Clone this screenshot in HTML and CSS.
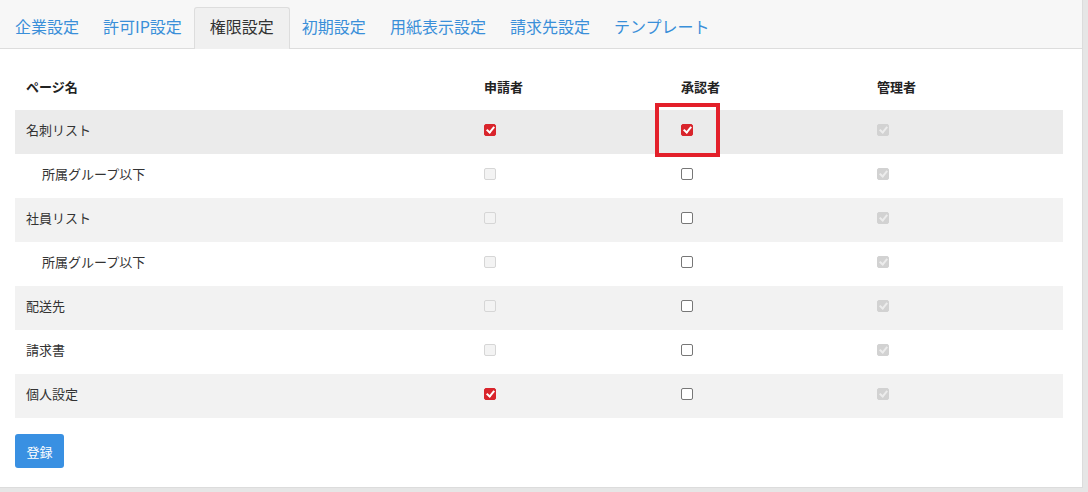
FILE: index.html
```html
<!DOCTYPE html>
<html lang="ja">
<head>
<meta charset="utf-8">
<title>権限設定</title>
<link rel="stylesheet" href="styles.css">
</head>
<body>
<div class="panel">
  <nav class="tabs">
    <a class="tab">企業設定</a>
    <a class="tab">許可IP設定</a>
    <a class="tab active">権限設定</a>
    <a class="tab">初期設定</a>
    <a class="tab">用紙表示設定</a>
    <a class="tab">請求先設定</a>
    <a class="tab">テンプレート</a>
  </nav>
  <div class="content">
    <table class="perm">
      <colgroup>
        <col class="c-name"><col class="c-a"><col class="c-b"><col class="c-c">
      </colgroup>
      <thead>
        <tr><th>ページ名</th><th>申請者</th><th>承認者</th><th>管理者</th></tr>
      </thead>
      <tbody>
        <tr class="hover">
          <td>名刺リスト</td>
          <td><input type="checkbox" class="cb" checked></td>
          <td class="mark-cell"><input type="checkbox" class="cb" checked><span class="mark"></span></td>
          <td><input type="checkbox" class="cb" checked disabled></td>
        </tr>
        <tr>
          <td class="sub">所属グループ以下</td>
          <td><input type="checkbox" class="cb" disabled></td>
          <td><input type="checkbox" class="cb"></td>
          <td><input type="checkbox" class="cb" checked disabled></td>
        </tr>
        <tr class="odd">
          <td>社員リスト</td>
          <td><input type="checkbox" class="cb" disabled></td>
          <td><input type="checkbox" class="cb"></td>
          <td><input type="checkbox" class="cb" checked disabled></td>
        </tr>
        <tr>
          <td class="sub">所属グループ以下</td>
          <td><input type="checkbox" class="cb" disabled></td>
          <td><input type="checkbox" class="cb"></td>
          <td><input type="checkbox" class="cb" checked disabled></td>
        </tr>
        <tr class="odd">
          <td>配送先</td>
          <td><input type="checkbox" class="cb" disabled></td>
          <td><input type="checkbox" class="cb"></td>
          <td><input type="checkbox" class="cb" checked disabled></td>
        </tr>
        <tr>
          <td>請求書</td>
          <td><input type="checkbox" class="cb" disabled></td>
          <td><input type="checkbox" class="cb"></td>
          <td><input type="checkbox" class="cb" checked disabled></td>
        </tr>
        <tr class="odd">
          <td>個人設定</td>
          <td><input type="checkbox" class="cb" checked></td>
          <td><input type="checkbox" class="cb"></td>
          <td><input type="checkbox" class="cb" checked disabled></td>
        </tr>
      </tbody>
    </table>
    <button class="btn">登録</button>
  </div>
</div>
</body>
</html>
```

FILE: styles.css
```css
html, body {
  margin: 0;
  padding: 0;
}
body {
  background: #e6e6e6;
  font-family: "Noto Sans CJK JP", "Noto Sans", sans-serif;
  color: #333;
  width: 1088px;
  height: 492px;
  overflow: hidden;
}
.panel {
  width: 1083px;
  height: 488px;
  background: #fff;
  border-right: 1px solid #dcdcdc;
  border-bottom: 1px solid #dcdcdc;
  box-sizing: border-box;
}
.tabs {
  display: flex;
  align-items: flex-end;
  height: 49px;
  box-sizing: border-box;
  padding-left: 3px;
  background: #f7f7f7;
  border-bottom: 1px solid #dddddd;
}
.tab {
  display: flex;
  align-items: center;
  height: 41px;
  box-sizing: border-box;
  padding: 0 12px 6px;
  font-size: 16px;
  color: #3a8fd9;
  white-space: nowrap;
  margin-bottom: -1px;
}
.tab.active {
  padding: 0 15px 5px;
  height: 42px;
  color: #333;
  background: #f0f0f0;
  border: 1px solid #dddddd;
  border-bottom: none;
  border-radius: 3px 3px 0 0;
}
.content {
  padding: 16px 0 0 15px;
}
.perm {
  border-collapse: collapse;
  width: 1048px;
  table-layout: fixed;
  font-size: 13px;
}
.c-name { width: 458px; }
.c-a { width: 197px; }
.c-b { width: 196px; }
.c-c { width: 197px; }
.perm th {
  height: 45px;
  box-sizing: border-box;
  text-align: left;
  font-weight: bold;
  padding: 0 11px 2px;
  color: #222;
}
.perm td {
  height: 44px;
  box-sizing: border-box;
  padding: 0 11px 5px;
  vertical-align: middle;
}
.perm td.sub {
  padding-left: 27px;
}
.perm tr.hover td { background: #ebebeb; }
.perm tr.odd td { background: #f2f2f2; }
.mark-cell {
  position: relative;
}
.mark {
  position: absolute;
  left: -15px;
  top: -7px;
  width: 65px;
  height: 54px;
  box-sizing: border-box;
  border: 4px solid #e3202a;
  pointer-events: none;
}
.cb {
  -webkit-appearance: none;
  appearance: none;
  display: block;
  margin: 0;
  width: 12px;
  height: 12px;
  box-sizing: border-box;
  border: 1px solid #777;
  border-radius: 2px;
  background: #fff;
  position: relative;
}
.cb:checked {
  background: #d9252c;
  border-color: #d9252c;
}
.cb:checked::after {
  content: "";
  position: absolute;
  left: 3px;
  top: 0px;
  width: 3px;
  height: 6px;
  border: solid #fff;
  border-width: 0 2px 2px 0;
  transform: rotate(40deg);
}
.cb:disabled {
  background: #f3f3f3;
  border-color: #d6d6d6;
}
.cb:disabled:checked {
  background: #d2d2d2;
  border-color: #d2d2d2;
}
.cb:disabled:checked::after {
  border-color: #ececec;
}
.btn {
  display: block;
  margin-top: 16px;
  width: 49px;
  height: 34px;
  border: none;
  border-radius: 3px;
  background: #3990e2;
  color: #fff;
  font-family: "Noto Sans CJK JP", sans-serif;
  font-size: 13px;
  padding: 0;
}
```
